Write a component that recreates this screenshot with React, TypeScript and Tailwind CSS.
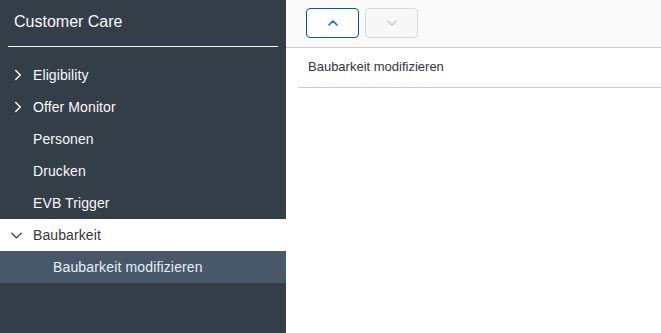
import { ChevronRight, ChevronDown, ChevronUp } from 'lucide-react';

const items = [
  { label: 'Eligibility', arrow: true },
  { label: 'Offer Monitor', arrow: true },
  { label: 'Personen', arrow: false },
  { label: 'Drucken', arrow: false },
  { label: 'EVB Trigger', arrow: false },
];

export default function App() {
  return (
    <div className="flex h-[333px] w-[661px] font-['Liberation_Sans',Arial,sans-serif] text-[14px]">
      {/* Side navigation */}
      <aside className="flex w-[286px] shrink-0 flex-col bg-[#333e48] text-[#fafafa]">
        <div className="mx-2 flex h-[47px] items-center border-b border-[#fafafa] px-[6px] pb-[2px] text-[16px]">
          Customer Care
        </div>
        <ul className="mt-[12px]">
          {items.map((it) => (
            <li key={it.label} className="flex h-[32px] items-center">
              <span className="flex w-[33px] justify-center pl-[2px]">
                {it.arrow && <ChevronRight size={18} strokeWidth={2} />}
              </span>
              <span className="tracking-[0.1px]">{it.label}</span>
            </li>
          ))}
          <li className="flex h-[32px] items-center bg-white text-[#32363a]">
            <span className="flex w-[33px] justify-center">
              <ChevronDown size={19} strokeWidth={1.7} />
            </span>
            <span className="tracking-[0.1px]">Baubarkeit</span>
          </li>
          <li className="flex h-[32px] items-center bg-[#475968] pl-[53px] tracking-[0.15px] text-[#e5f0fa]">
            Baubarkeit modifizieren
          </li>
        </ul>
      </aside>

      {/* Content */}
      <main className="flex flex-1 flex-col bg-white">
        <div className="flex h-[48px] items-start gap-[6px] border-b border-[#cccccc] bg-[#fafafa] pl-[20px] pt-[8px]">
          <button className="flex h-[30px] w-[53px] items-center justify-center rounded-[4px] border border-[#0854a0] bg-white text-[#0a6ed1]">
            <ChevronUp size={16} strokeWidth={2.4} />
          </button>
          <button className="flex h-[30px] w-[53px] items-center justify-center rounded-[4px] border border-[#d9d9d9] bg-[#f7f7f7] text-[#c8c8c8]">
            <ChevronDown size={16} strokeWidth={2} />
          </button>
        </div>
        <div className="ml-[12px] flex h-[40px] items-center border-b border-[#cccccc] pb-[1px] pl-[10px] text-[13px] text-[#32363a]">
          Baubarkeit modifizieren
        </div>
      </main>
    </div>
  );
}
